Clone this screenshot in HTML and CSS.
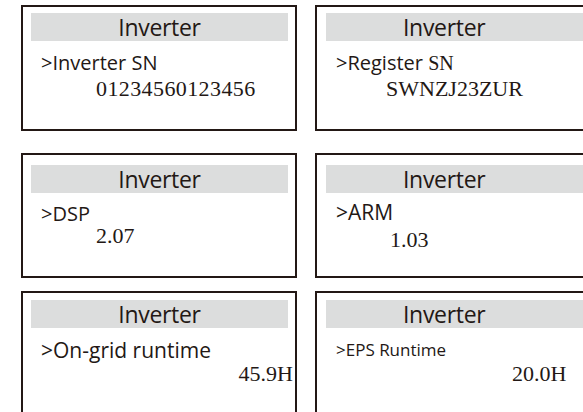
FILE: index.html
```html
<!DOCTYPE html>
<html lang="en">
<head>
<meta charset="UTF-8">
<meta name="viewport" content="width=device-width, initial-scale=1.0">
<title>Inverter</title>
<link rel="stylesheet" href="styles.css">
</head>
<body>
    <div class="panel">
        <div class="row row-one">
            <div class="screen">
                <div class="screen-title">Inverter</div>
                <div class="item">&gt;Inverter SN</div>
                <div class="value sn">01234560123456</div>
            </div>
            <div class="screen right">
                <div class="screen-title">Inverter</div>
                <div class="item">&gt;Register <span class="serif">SN</span></div>
                <div class="value reg">SWNZJ23ZUR</div>
            </div>
        </div>

        <div class="row row-two">
            <div class="screen">
                <div class="screen-title">Inverter</div>
                <div class="item">&gt;DSP</div>
                <div class="value dsp">2.07</div>
            </div>
            <div class="screen right">
                <div class="screen-title">Inverter</div>
                <div class="item big">&gt;ARM</div>
                <div class="value arm">1.03</div>
            </div>
        </div>

        <div class="row row-three">
            <div class="screen">
                <div class="screen-title">Inverter</div>
                <div class="item big">&gt;On-grid runtime</div>
                <div class="value grid">45.9H</div>
            </div>
            <div class="screen right">
                <div class="screen-title">Inverter</div>
                <div class="item small">&gt;EPS Runtime</div>
                <div class="value eps">20.0H</div>
            </div>
        </div>
    </div>
</body>
</html>
```

FILE: styles.css
```css
body {
    margin: 0;
    overflow: hidden;
    background-color: #fff;
    color: #231815;
    font-family: "Open Sans", sans-serif;
}
.panel {
    display: flex;
    flex-direction: column;
    padding: 5px 0 0 21px;
}
.row {
    display: flex;
    gap: 18px;
}
.row-one {
    height: 126px;
}
.row-two {
    height: 125px;
    margin-top: 22px;
}
.row-three {
    height: 140px;
    margin-top: 13px;
}
.screen {
    width: 276px;
    flex-shrink: 0;
    box-sizing: border-box;
    border: 2px solid #231815;
}
.screen.right {
    width: 290px;
}
.screen-title {
    height: 28px;
    margin: 6px 7px 0 8px;
    background-color: #dcdddd;
    font-size: 23px;
    letter-spacing: -0.3px;
    line-height: 29px;
    text-align: center;
}
.right .screen-title {
    margin-left: 9px;
    padding-left: 77px;
    text-align: left;
}
.row-two .screen-title {
    margin-top: 10px;
}
.row-three .screen-title {
    margin-top: 7px;
}
.item {
    margin-top: 10px;
    padding-left: 18px;
    font-size: 20px;
    line-height: 24px;
}
.right .item {
    padding-left: 19px;
}
.row-two .item {
    margin-top: 9px;
}
.item.big {
    font-size: 21px;
}
.item.small {
    font-size: 17px;
}
.row-two .item.big {
    margin-top: 7px;
}
.serif {
    font-family: "Liberation Serif", serif;
}
.value {
    padding-left: 73px;
    font-family: "Liberation Serif", serif;
    font-size: 22px;
    line-height: 24px;
    font-variant-numeric: oldstyle-nums;
}
.value.sn {
    margin-top: 2px;
    letter-spacing: 0.4px;
}
.value.reg {
    margin-top: 2px;
    padding-left: 69px;
}
.value.dsp {
    margin-top: -2px;
}
.value.arm {
    margin-top: 4px;
}
.value.grid {
    padding: 0 2px 0 0;
    text-align: right;
}
.value.eps {
    padding-left: 195px;
}
```
